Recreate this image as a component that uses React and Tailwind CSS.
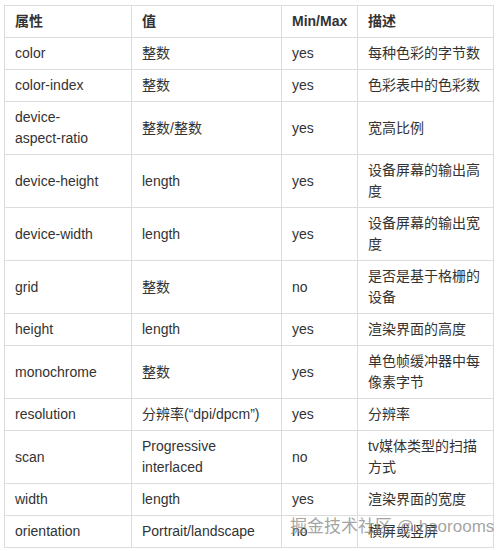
const rows = [
  ['color', '整数', 'yes', '每种色彩的字节数'],
  ['color-index', '整数', 'yes', '色彩表中的色彩数'],
  [
    <>
      device-<br />
      <span className="whitespace-nowrap">aspect-ratio</span>
    </>,
    '整数/整数',
    'yes',
    '宽高比例',
  ],
  ['device-height', 'length', 'yes', '设备屏幕的输出高度'],
  ['device-width', 'length', 'yes', '设备屏幕的输出宽度'],
  ['grid', '整数', 'no', '是否是基于格栅的设备'],
  ['height', 'length', 'yes', '渲染界面的高度'],
  ['monochrome', '整数', 'yes', '单色帧缓冲器中每像素字节'],
  ['resolution', '分辨率(“dpi/dpcm”)', 'yes', '分辨率'],
  ['scan', 'Progressive interlaced', 'no', 'tv媒体类型的扫描方式'],
  ['width', 'length', 'yes', '渲染界面的宽度'],
  ['orientation', 'Portrait/landscape', 'no', '横屏或竖屏'],
];

const cell = 'border border-[#dcdcdc] px-[10px] py-[5px] align-middle';

export default function App() {
  return (
    <div
      className="relative w-[497px] h-[551px] bg-white pl-[4px] pt-[5px] text-[14px] leading-[21px] text-[#333]"
      style={{ fontFamily: '"Liberation Sans", "Noto Sans CJK SC", sans-serif' }}
    >
      <table className="table-fixed border-collapse w-[489px]">
        <colgroup>
          <col className="w-[127px]" />
          <col className="w-[150px]" />
          <col className="w-[76px]" />
          <col className="w-[136px]" />
        </colgroup>
        <thead>
          <tr className="font-bold text-left">
            <th className={cell}>属性</th>
            <th className={cell}>值</th>
            <th className={cell}>Min/Max</th>
            <th className={cell}>描述</th>
          </tr>
        </thead>
        <tbody>
          {rows.map((r, k) => (
            <tr key={k}>
              {r.map((c, i) => (
                <td key={i} className={cell}>{c}</td>
              ))}
            </tr>
          ))}
        </tbody>
      </table>
      <div className="absolute left-[290px] top-[516px] text-[17px] leading-[22px] text-[#8c8c8c]/80 whitespace-nowrap">
        掘金技术社区 @ haorooms
      </div>
    </div>
  );
}
